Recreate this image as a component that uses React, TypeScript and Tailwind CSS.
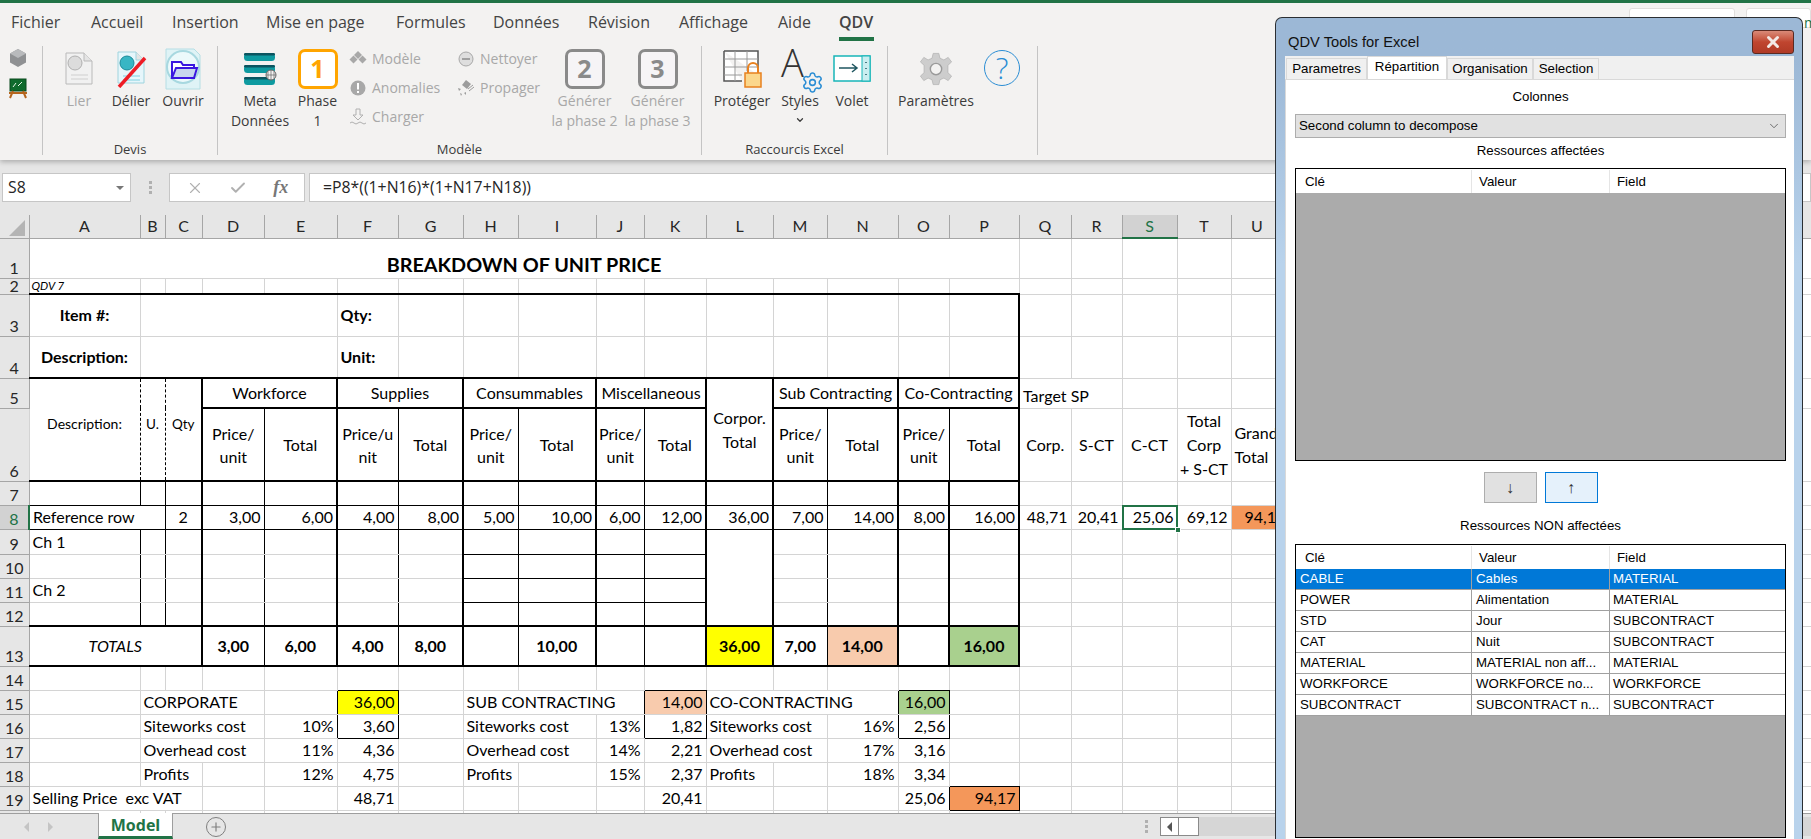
import type { ReactNode } from 'react';
import { ChevronDown, X, Check, Plus, Settings } from 'lucide-react';
import clsx from 'clsx';

const R1 = 'border-r-black';
const R2 = 'border-r-2 border-r-black';
const B1 = 'border-b-black';
const B2 = 'border-b-2 border-b-black';

const NUM = 'text-right pr-[3px]';
const MID = 'text-center';
const BOLD = 'text-center font-bold';

type Cell = { t?: ReactNode; s?: number; rs?: number; c?: string };

const colWidths = ['w-[29px]', 'w-[111px]', 'w-[25px]', 'w-[37px]', 'w-[62px]', 'w-[73px]', 'w-[61px]', 'w-[65px]', 'w-[55px]', 'w-[78px]', 'w-[48px]', 'w-[62px]', 'w-[67px]', 'w-[54px]', 'w-[71px]', 'w-[51px]', 'w-[70px]', 'w-[52px]', 'w-[51px]', 'w-[55px]', 'w-[54px]', 'w-[52px]', 'w-[528px]'];
const letters = ['A', 'B', 'C', 'D', 'E', 'F', 'G', 'H', 'I', 'J', 'K', 'L', 'M', 'N', 'O', 'P', 'Q', 'R', 'S', 'T', 'U', ''];

const empty = (n: number, c = ''): Cell[] => Array.from({ length: n }, () => ({ c }));

// columns D..P of the boxed table, with the right border each column keeps
const dToP = (bottom: string, vals: (ReactNode | Cell)[] = [], cellClass = ''): Cell[] => {
  const rights = [R1, R2, R1, R2, R1, R2, R1, R2, R2, R1, R2, R2, R2];
  return rights.map((r, i) => {
    const v = vals[i];
    const isCell = v !== null && typeof v === 'object' && 'c' in (v as object);
    return isCell
      ? { ...(v as Cell), c: clsx(r, bottom, (v as Cell).c) }
      : { t: v as ReactNode, c: clsx(r, bottom, cellClass) };
  });
};

const priceUnit = <span className="block leading-[23px]">Price/<br />unit</span>;

const rows: { n: number; h: string; cells: Cell[] }[] = [
  {
    n: 1, h: 'h-[40px]', cells: [
      { t: 'BREAKDOWN OF UNIT PRICE', s: 16, c: 'text-center font-bold text-[19.8px] align-bottom pb-[4px]' },
      ...empty(5),
    ],
  },
  {
    n: 2, h: 'h-[16px]', cells: [
      { t: 'QDV 7', c: clsx('italic text-[11.5px] leading-[14px] pl-[2px]', B2) },
      ...empty(15, B2),
      ...empty(5),
    ],
  },
  {
    n: 3, h: 'h-[42px]', cells: [
      { t: 'Item #:', c: 'text-center font-bold' },
      { s: 4 },
      { t: 'Qty:', c: 'font-bold pl-[3px]' },
      ...empty(9),
      { c: R2 },
      ...empty(5),
    ],
  },
  {
    n: 4, h: 'h-[42px]', cells: [
      { t: 'Description:', c: clsx('text-center font-bold', B2) },
      { s: 4, c: B2 },
      { t: 'Unit:', c: clsx('font-bold pl-[3px]', B2) },
      ...empty(9, B2),
      { c: clsx(R2, B2) },
      ...empty(5),
    ],
  },
  {
    n: 5, h: 'h-[30px]', cells: [
      { t: 'Description:', rs: 2, c: clsx('text-center text-[14px] pb-[12px] [border-right-style:dashed]', R1, B2) },
      { t: 'U.', rs: 2, c: clsx('text-center text-[13.5px] pb-[12px] [border-left-style:dashed] [border-right-style:dashed]', R1, B2) },
      { t: 'Qty', rs: 2, c: clsx('text-center text-[13.5px] pb-[12px] [border-left-style:dashed]', R2, B2) },
      { t: 'Workforce', s: 2, c: clsx(MID, R2, B2) },
      { t: 'Supplies', s: 2, c: clsx(MID, R2, B2) },
      { t: 'Consummables', s: 2, c: clsx(MID, R2, B2) },
      { t: 'Miscellaneous', s: 2, c: clsx(MID, R2, B2) },
      { t: <span className="block leading-[24px]">Corpor.<br />Total</span>, rs: 2, c: clsx(MID, R2, B2) },
      { t: 'Sub Contracting', s: 2, c: clsx(MID, R2, B2) },
      { t: 'Co-Contracting', s: 2, c: clsx(MID, R2, B2) },
      { t: 'Target SP', s: 2, c: 'align-bottom pl-[3px] pb-[2px]' },
      ...empty(3),
    ],
  },
  {
    n: 6, h: 'h-[71px]', cells: [
      { t: priceUnit, c: clsx(MID, R1, B2) },
      { t: 'Total', c: clsx(MID, R2, B2) },
      { t: <span className="block leading-[23px]">Price/u<br />nit</span>, c: clsx(MID, R1, B2) },
      { t: 'Total', c: clsx(MID, R2, B2) },
      { t: priceUnit, c: clsx(MID, R1, B2) },
      { t: 'Total', c: clsx(MID, R2, B2) },
      { t: priceUnit, c: clsx(MID, R1, B2) },
      { t: 'Total', c: clsx(MID, R2, B2) },
      { t: priceUnit, c: clsx(MID, R1, B2) },
      { t: 'Total', c: clsx(MID, R2, B2) },
      { t: priceUnit, c: clsx(MID, R1, B2) },
      { t: 'Total', c: clsx(MID, R2, B2) },
      { t: 'Corp.', c: MID },
      { t: 'S-CT', c: MID },
      { t: 'C-CT', c: MID },
      { t: <span className="block leading-[24px]">Total<br />Corp<br />+ S-CT</span>, c: MID },
      { t: <span className="block leading-[24px]">Grand<br />Total</span>, c: 'pl-[3px]' },
    ],
  },
  {
    n: 7, h: 'h-[24px]', cells: [
      { c: clsx(R1, B1) }, { c: clsx(R1, B1) }, { c: clsx(R2, B1) },
      ...dToP(B1),
      ...empty(5),
    ],
  },
  {
    n: 8, h: 'h-[24px]', cells: [
      { t: 'Reference row', s: 2, c: clsx('pl-[3px]', R1, B1) },
      { t: '2', c: clsx(MID, R2, B1) },
      ...dToP(B1, ['3,00', '6,00', '4,00', '8,00', '5,00', '10,00', '6,00', '12,00', '36,00', '7,00', '14,00', '8,00', '16,00'], NUM),
      { t: '48,71', c: NUM },
      { t: '20,41', c: NUM },
      {
        t: (
          <>
            25,06
            <span className="absolute inset-[-1px] border-2 border-[#217346]" />
            <span className="absolute right-[-4px] bottom-[-4px] h-[6px] w-[6px] border border-white bg-[#217346]" />
          </>
        ),
        c: clsx('relative', NUM),
      },
      { t: '69,12', c: NUM },
      { t: '94,17', c: 'bg-[#f4975a] pl-[13px] text-left' },
    ],
  },
  {
    n: 9, h: 'h-[25px]', cells: [
      { t: 'Ch 1', c: clsx('pl-[3px]', R1) }, { c: R1 }, { c: R2 },
      { c: R1 }, { c: R2 }, { c: R1 }, { c: R2 },
      { c: clsx(R1, B1) }, { c: clsx(R2, B1) }, { c: clsx(R1, B1) }, { c: clsx(R2, B1) },
      { rs: 4, c: clsx(R2, B2) },
      { c: R1 }, { c: R2 }, { c: R2 }, { c: R2 },
      ...empty(5),
    ],
  },
  {
    n: 10, h: 'h-[24px]', cells: [
      { c: R1 }, { c: R1 }, { c: R2 },
      { c: R1 }, { c: R2 }, { c: R1 }, { c: R2 },
      { c: clsx(R1, B1) }, { c: clsx(R2, B1) }, { c: clsx(R1, B1) }, { c: clsx(R2, B1) },
      { c: R1 }, { c: R2 }, { c: R2 }, { c: R2 },
      ...empty(5),
    ],
  },
  {
    n: 11, h: 'h-[24px]', cells: [
      { t: 'Ch 2', c: clsx('pl-[3px]', R1) }, { c: R1 }, { c: R2 },
      { c: R1 }, { c: R2 }, { c: R1 }, { c: R2 },
      { c: clsx(R1, B1) }, { c: clsx(R2, B1) }, { c: clsx(R1, B1) }, { c: clsx(R2, B1) },
      { c: R1 }, { c: R2 }, { c: R2 }, { c: R2 },
      ...empty(5),
    ],
  },
  {
    n: 12, h: 'h-[24px]', cells: [
      { c: clsx(R1, B2) }, { c: clsx(R1, B2) }, { c: clsx(R2, B2) },
      { c: clsx(R1, B2) }, { c: clsx(R2, B2) }, { c: clsx(R1, B2) }, { c: clsx(R2, B2) },
      { c: clsx(R1, B2) }, { c: clsx(R2, B2) }, { c: clsx(R1, B2) }, { c: clsx(R2, B2) },
      { c: clsx(R1, B2) }, { c: clsx(R2, B2) }, { c: clsx(R2, B2) }, { c: clsx(R2, B2) },
      ...empty(5),
    ],
  },
  {
    n: 13, h: 'h-[40px]', cells: [
      { t: 'TOTALS', s: 3, c: clsx('text-center italic', R2, B2) },
      ...dToP(B2, [
        '3,00', '6,00', '4,00', '8,00', '', '10,00', '', '',
        { t: '36,00', c: 'bg-[#ffff00] text-center font-bold' },
        '7,00',
        { t: '14,00', c: 'bg-[#f8cbad] text-center font-bold' },
        '',
        { t: '16,00', c: 'bg-[#a9d08e] text-center font-bold' },
      ], BOLD),
      ...empty(5),
    ],
  },
  {
    n: 14, h: 'h-[24px]', cells: [
      ...empty(5),
      { c: B1 },
      ...empty(4),
      { c: B1 },
      ...empty(3),
      { c: B1 },
      ...empty(6),
    ],
  },
  {
    n: 15, h: 'h-[24px]', cells: [
      {},
      { t: 'CORPORATE', s: 3, c: 'pl-[3px]' },
      { c: R1 },
      { t: '36,00', c: clsx('bg-[#ffff00]', NUM, R1) },
      {},
      { t: 'SUB CONTRACTING', s: 3, c: clsx('pl-[3px]', R1) },
      { t: '14,00', c: clsx('bg-[#f8cbad]', NUM, R1) },
      { t: 'CO-CONTRACTING', s: 3, c: clsx('pl-[3px]', R1) },
      { t: '16,00', c: clsx('bg-[#a9d08e]', NUM, R1) },
      ...empty(6),
    ],
  },
  {
    n: 16, h: 'h-[24px]', cells: [
      {},
      { t: 'Siteworks cost', s: 3, c: 'pl-[3px]' },
      { t: '10%', c: clsx(NUM, R1) },
      { t: '3,60', c: clsx(NUM, R1, B1) },
      {},
      { t: 'Siteworks cost', s: 2, c: 'pl-[3px]' },
      { t: '13%', c: clsx(NUM, R1) },
      { t: '1,82', c: clsx(NUM, R1, B1) },
      { t: 'Siteworks cost', s: 2, c: 'pl-[3px]' },
      { t: '16%', c: clsx(NUM, R1) },
      { t: '2,56', c: clsx(NUM, R1, B1) },
      ...empty(6),
    ],
  },
  {
    n: 17, h: 'h-[24px]', cells: [
      {},
      { t: 'Overhead cost', s: 3, c: 'pl-[3px]' },
      { t: '11%', c: NUM },
      { t: '4,36', c: NUM },
      {},
      { t: 'Overhead cost', s: 2, c: 'pl-[3px]' },
      { t: '14%', c: NUM },
      { t: '2,21', c: NUM },
      { t: 'Overhead cost', s: 2, c: 'pl-[3px]' },
      { t: '17%', c: NUM },
      { t: '3,16', c: NUM },
      ...empty(6),
    ],
  },
  {
    n: 18, h: 'h-[24px]', cells: [
      {},
      { t: 'Profits', s: 2, c: 'pl-[3px]' },
      {},
      { t: '12%', c: NUM },
      { t: '4,75', c: NUM },
      {},
      { t: 'Profits', c: 'pl-[3px]' },
      {},
      { t: '15%', c: NUM },
      { t: '2,37', c: NUM },
      { t: 'Profits', c: 'pl-[3px]' },
      {},
      { t: '18%', c: NUM },
      { t: '3,34', c: NUM },
      { c: B1 },
      ...empty(5),
    ],
  },
  {
    n: 19, h: 'h-[24px]', cells: [
      { t: 'Selling Price  exc VAT', s: 3, c: 'pl-[3px] whitespace-pre' },
      {},
      {},
      { t: '48,71', c: NUM },
      ...empty(4),
      { t: '20,41', c: NUM },
      ...empty(3),
      { t: '25,06', c: clsx(NUM, R1) },
      { t: '94,17', c: clsx('bg-[#f4975a]', NUM, R1, B1) },
      ...empty(5),
    ],
  },
  { n: 20, h: 'h-[24px]', cells: empty(21) },
];

function Sheet() {
  return (
    <table className="w-[1811px] table-fixed border-collapse font-['Lato',sans-serif] text-[16px] leading-[20px] text-black">
      <colgroup>
        {colWidths.map((w, i) => <col key={i} className={w} />)}
      </colgroup>
      <thead>
        <tr className="h-[23px]">
          <th className="border-r border-b border-[#a6a6a6] bg-[#e6e6e6] p-0 align-top">
            <svg className="block" width="29" height="22" viewBox="0 0 29 22"><path d="M9 21 L25 21 L25 5 Z" fill="#b4b4b4" /></svg>
          </th>
          {letters.map((l, i) => (
            <th
              key={i}
              className={clsx(
                'border-r border-b p-0 text-[16px] leading-[20px] font-normal',
                l === 'S'
                  ? 'border-r-[#a6a6a6] border-b-2 border-b-[#217346] bg-[#d2d2d2] text-[#217346]'
                  : 'border-[#a6a6a6] bg-[#e6e6e6] text-[#262626]',
              )}
            >
              {l}
            </th>
          ))}
        </tr>
      </thead>
      <tbody>
        {rows.map((r) => (
          <tr key={r.n} className={r.h}>
            <td
              className={clsx(
                'border-r border-b border-[#a6a6a6] p-0 text-center align-bottom text-[16px] leading-[20px]',
                r.n === 8 ? 'border-r-2 border-r-[#217346] bg-[#d2d2d2] text-[#217346]' : 'bg-[#e6e6e6] text-[#262626]',
              )}
            >
              {r.n === 2 ? <div className="h-[15px] overflow-hidden leading-[13px]">2</div> : r.n < 20 && r.n}
            </td>
            {r.cells.map((cell, i) => (
              <td
                key={i}
                colSpan={cell.s}
                rowSpan={cell.rs}
                className={clsx('overflow-visible border border-[#d4d4d4] p-0 whitespace-nowrap', cell.c)}
              >
                {cell.t}
              </td>
            ))}
            <td className="border border-[#d4d4d4] p-0" />
          </tr>
        ))}
      </tbody>
    </table>
  );
}

function BigBtn({ w, icon, lines, off }: { w: string; icon: ReactNode; lines: ReactNode[]; off?: boolean }) {
  return (
    <div className={clsx('flex flex-col items-center', w, off ? 'text-[#a8a8a8]' : 'text-[#3b3b3b]')}>
      <div className="flex h-[45px] items-center justify-center">{icon}</div>
      {lines.map((l, i) => (
        <div key={i} className="h-[20px] leading-[20px] whitespace-nowrap">{l}</div>
      ))}
    </div>
  );
}

function SmallBtn({ icon, label }: { icon: ReactNode; label: string }) {
  return (
    <div className="flex h-[29px] items-center gap-[5px] text-[#a8a8a8]">
      <div className="flex w-[18px] justify-center">{icon}</div>
      <span>{label}</span>
    </div>
  );
}

function Group({ w, label, children }: { w: string; label?: string; children: ReactNode }) {
  return (
    <div className={clsx('relative flex h-[109px] shrink-0 border-r border-[#c4c4c4]', w)}>
      {children}
      {label && (
        <div className="absolute right-0 bottom-[-3px] left-0 text-center text-[13px] leading-[18px] text-[#3b3b3b]">{label}</div>
      )}
    </div>
  );
}

function PhaseIcon({ n, on }: { n: number; on?: boolean }) {
  return (
    <div
      className={clsx(
        'mt-[1px] flex h-[40px] w-[40px] items-center justify-center rounded-[7px] border-[3px] text-[25px] font-bold',
        on ? 'border-[#ffa500] bg-white text-[#ffa500]' : 'border-[#8a8a8a] bg-[#f6f4f6] text-[#8a8a8a]',
      )}
    >
      {n}
    </div>
  );
}

const DocShape = ({ fill = '#f1f1f1', stroke = '#b9b9b9' }: { fill?: string; stroke?: string }) => (
  <>
    <path d="M4 2 H22 L30 10 V33 H4 Z" fill={fill} stroke={stroke} />
    <path d="M22 2 V10 H30" fill="#e4e4e4" stroke={stroke} />
  </>
);

function Ribbon() {
  return (
    <div className="relative z-10 h-[160px] shrink-0 bg-[#f3f2f1] font-['Open_Sans',sans-serif] shadow-[0_2px_5px_rgba(0,0,0,0.25)]">
      <div className="h-[3px] bg-[#217346]" />
      <div className="flex h-[37px] items-center pl-[11px] text-[16px] leading-[36px] text-[#444]">
        <span className="w-[80px]">Fichier</span>
        <span className="w-[81px]">Accueil</span>
        <span className="w-[94px]">Insertion</span>
        <span className="w-[130px]">Mise en page</span>
        <span className="w-[97px]">Formules</span>
        <span className="w-[95px]">Données</span>
        <span className="w-[91px]">Révision</span>
        <span className="w-[99px]">Affichage</span>
        <span className="w-[61px]">Aide</span>
        <span className="relative font-semibold">
          QDV
          <span className="absolute right-[-1px] bottom-[-1px] left-0 h-[4px] bg-[#217346]" />
        </span>
      </div>
      <div className="absolute top-[8px] left-[1629px] h-[20px] w-[106px] rounded-t-[3px] border border-[#e1dfdd] bg-white" />
      <div className="absolute top-[8px] left-[1746px] h-[20px] w-[65px] rounded-t-[3px] border border-[#e1dfdd] bg-white" />
      <div className="absolute top-[16px] left-[1804px] text-[14px] leading-[14px] text-[#217346]">m</div>

      <div className="mt-[6px] flex text-[14px]">
        <Group w="w-[43px]">
          <div className="flex w-full flex-col items-center gap-[10px] pt-[2px] pr-[7px]">
            <svg width="18" height="20" viewBox="0 0 18 20"><path d="M9 1 L17 5.5 V14.5 L9 19 L1 14.5 V5.5 Z" fill="#8f9193" /><path d="M9 1 L17 5.5 L9 10 L1 5.5 Z" fill="#b8babc" /></svg>
            <svg width="20" height="21" viewBox="0 0 20 21"><rect x="2" y="1" width="16" height="12" fill="#0f6b2d" stroke="#0a4a1f" /><path d="M5 9 L8 5 M10 8 L14 4" stroke="#e8f5e8" /><path d="M5 13 L2 20 M15 13 L18 20 M1 15 H19" stroke="#b5651d" strokeWidth="2" /></svg>
          </div>
        </Group>

        <Group w="w-[175px]" label="Devis">
          <div className="flex pl-[10px]">
            <BigBtn w="w-[52px]" off lines={['Lier']} icon={
              <svg width="34" height="36" viewBox="0 0 34 36"><DocShape /><circle cx="13" cy="12" r="7" fill="#dcdcdc" stroke="#b0b0b0" /><path d="M9 24 H26 M9 28 H26" stroke="#cfcfcf" /></svg>
            } />
            <BigBtn w="w-[52px]" lines={['Délier']} icon={
              <svg width="34" height="38" viewBox="0 0 34 38"><DocShape fill="#e6f6fb" stroke="#9fd4de" /><circle cx="13" cy="13" r="7" fill="#38b6c4" stroke="#1a8a99" /><path d="M9 26 H26 M9 30 H26" stroke="#7fd0e0" /><path d="M5 37 L31 8" stroke="#ee1c25" strokeWidth="3.5" /></svg>
            } />
            <BigBtn w="w-[52px]" lines={['Ouvrir']} icon={
              <svg width="38" height="42" viewBox="0 0 38 42"><path d="M2 1 H30 L36 7 V41 H2 Z" fill="#dff3f6" stroke="#b5dee4" /><circle cx="19" cy="19" r="16" fill="#ecf9fb" stroke="#a8d8e0" strokeWidth="2" /><path d="M8 14 H17 L19 17 H30 V30 H8 Z" fill="#fff" stroke="#3a16e0" strokeWidth="2" /><path d="M8 30 L12 20 H33 L30 30 Z" fill="#c8d6ee" stroke="#3a16e0" strokeWidth="2" /></svg>
            } />
          </div>
        </Group>

        <Group w="w-[484px]" label="Modèle">
          <div className="flex pl-[7px]">
            <BigBtn w="w-[70px]" lines={['Meta', 'Données']} icon={
              <svg width="36" height="36" viewBox="0 0 36 36">
                <rect x="2" y="2" width="31" height="8" rx="3.5" fill="#0e9aa0" /><rect x="2" y="2" width="31" height="2.5" rx="1.2" fill="#0b5560" />
                <rect x="2" y="14" width="31" height="8" rx="3.5" fill="#0e9aa0" /><rect x="2" y="14" width="31" height="2.5" rx="1.2" fill="#0b5560" />
                <rect x="2" y="26" width="31" height="8" rx="3.5" fill="#0e9aa0" /><rect x="2" y="26" width="31" height="2.5" rx="1.2" fill="#0b5560" />
                <circle cx="29" cy="24" r="5" fill="#f3f2f1" stroke="#666" /><path d="M24 24 H34 M29 19 V29 M26 20.5 V27.5 M32 20.5 V27.5" stroke="#666" strokeWidth="0.7" />
              </svg>
            } />
            <BigBtn w="w-[45px]" lines={['Phase', '1']} icon={<PhaseIcon n={1} on />} />
            <div className="mt-[-2px] ml-[9px] flex w-[108px] flex-col">
              <SmallBtn label="Modèle" icon={<svg width="18" height="18" viewBox="0 0 18 18"><path d="M9 1 L13 5 L9 9 L5 5 Z M4.5 5.5 L8.5 9.5 L4.5 13.5 L0.5 9.5 Z M13.5 5.5 L17.5 9.5 L13.5 13.5 L9.5 9.5 Z" fill="#a8a8a8" /></svg>} />
              <SmallBtn label="Anomalies" icon={<svg width="16" height="16" viewBox="0 0 16 16"><circle cx="8" cy="8" r="7.5" fill="#a8a8a8" /><rect x="7" y="3" width="2" height="6.5" fill="#fff" /><rect x="7" y="11" width="2" height="2" fill="#fff" /></svg>} />
              <SmallBtn label="Charger" icon={<svg width="18" height="18" viewBox="0 0 18 18" fill="none" stroke="#b0b0b0"><path d="M7 1 H11 V7 H14 L9 12 L4 7 H7 Z" /><path d="M1 15 Q3 13 5 15 T9 15 T13 15 T17 15" /></svg>} />
            </div>
            <div className="mt-[-2px] flex w-[91px] flex-col">
              <SmallBtn label="Nettoyer" icon={<svg width="16" height="16" viewBox="0 0 16 16"><circle cx="8" cy="8" r="7" fill="#dedede" stroke="#a8a8a8" /><path d="M4 8 H12" stroke="#a0a0a0" strokeWidth="2" /></svg>} />
              <SmallBtn label="Propager" icon={<svg width="18" height="18" viewBox="0 0 18 18" fill="#9c9c9c"><path d="M9 1 L14 5 L10 10 L5 6 Z" /><path d="M1 9 L4 10 L2 12 Z M3 14 L5 15 L4 17 Z M7 14 L9 13 L9 16 Z" /><path d="M11 10 L16 6 M12 12 L17 8" stroke="#9c9c9c" /></svg>} />
            </div>
            <BigBtn w="w-[73px]" off lines={['Générer', 'la phase 2']} icon={<PhaseIcon n={2} />} />
            <BigBtn w="w-[73px]" off lines={['Générer', 'la phase 3']} icon={<PhaseIcon n={3} />} />
          </div>
        </Group>

        <Group w="w-[186px]" label="Raccourcis Excel">
          <div className="flex pl-[6px]">
            <BigBtn w="w-[68px]" lines={['Protéger']} icon={
              <svg width="40" height="40" viewBox="0 0 40 40">
                <path d="M2 2 H36 V26 M2 2 V32 H20" fill="#fff" stroke="#555" strokeWidth="1.5" />
                <path d="M2 10 H36 M2 18 H36 M2 26 H20 M13 2 V32 M25 2 V22" stroke="#9a9a9a" />
                <path d="M26 24 V19 A5 5 0 0 1 36 19 V24" fill="none" stroke="#e8811f" strokeWidth="2" />
                <rect x="23" y="24" width="16" height="14" fill="#fbd78c" stroke="#e8811f" strokeWidth="1.5" />
              </svg>
            } />
            <BigBtn w="w-[48px]" lines={['Styles', <ChevronDown key="c" className="mt-[4px] h-[10px] w-[10px]" strokeWidth={3} />]} icon={
              <div className="relative mt-[-6px] h-[44px] w-[38px]">
                <span className="absolute top-[-7px] left-[0px] text-[38px] leading-[50px] font-light text-[#333]">A</span>
                <Settings className="absolute right-[-5px] bottom-[-6px] h-[23px] w-[23px] text-[#2a8dd4]" strokeWidth={1.6} />
              </div>
            } />
            <BigBtn w="w-[56px]" lines={['Volet']} icon={
              <svg width="38" height="28" viewBox="0 0 38 28"><rect x="1" y="1" width="36" height="25" fill="#fff" stroke="#17b5b8" strokeWidth="1.5" /><rect x="29" y="1" width="8" height="25" fill="#c9eef0" stroke="#17b5b8" /><path d="M6 13 H23 M19 9 L24 13 L19 17" fill="none" stroke="#1f5660" strokeWidth="1.5" /><path d="M33 7 V8 M33 13 V14 M33 19 V20" stroke="#1f5660" strokeWidth="1.5" /></svg>
            } />
          </div>
        </Group>

        <Group w="w-[150px]">
          <div className="flex pl-[8px]">
            <BigBtn w="w-[80px]" lines={['Paramètres']} icon={
              <svg width="34" height="36" viewBox="0 0 24 24"><path d="M10 1 H14 L14.8 4.4 L17.6 5.6 L20.6 3.8 L23 7 L20.4 9.4 V12 V14.6 L23 17 L20.6 20.2 L17.6 18.4 L14.8 19.6 L14 23 H10 L9.2 19.6 L6.4 18.4 L3.4 20.2 L1 17 L3.6 14.6 V9.4 L1 7 L3.4 3.8 L6.4 5.6 L9.2 4.4 Z" fill="#cdcdcd" stroke="#b0b0b0" strokeWidth="0.5" /><circle cx="12" cy="12" r="4" fill="#f3f2f1" stroke="#9a9a9a" /></svg>
            } />
            <div className="flex w-[52px] justify-center pt-[4px]">
              <div className="flex h-[36px] w-[36px] items-center justify-center rounded-full border-[1.5px] border-[#2a8dd4] text-[30px] leading-none font-light text-[#2a8dd4]">?</div>
            </div>
          </div>
        </Group>
      </div>
    </div>
  );
}

function FormulaBar() {
  return (
    <div className="flex h-[55px] shrink-0 items-start bg-[#e6e6e6] pt-[13px] pl-[2px] font-['Open_Sans',sans-serif] text-[15.8px] text-[#262626]">
      <div className="flex h-[29px] w-[129px] items-center justify-between border border-[#c6c6c6] bg-white pr-[6px] pl-[5px]">
        <span>S8</span>
        <span className="h-0 w-0 border-x-[4px] border-t-[4px] border-x-transparent border-t-[#777]" />
      </div>
      <div className="flex h-[29px] w-[38px] flex-col items-center justify-center gap-[2px]">
        <span className="h-[3px] w-[3px] bg-[#b0b0b0]" />
        <span className="h-[3px] w-[3px] bg-[#b0b0b0]" />
        <span className="h-[3px] w-[3px] bg-[#b0b0b0]" />
      </div>
      <div className="flex h-[29px] w-[136px] items-center justify-around border border-[#c6c6c6] bg-white px-[3px] text-[#b0b0b0]">
        <X className="h-[18px] w-[18px]" strokeWidth={1.5} />
        <Check className="h-[18px] w-[18px]" strokeWidth={2.5} />
        <span className="font-['Liberation_Serif',serif] text-[18px] font-bold text-[#777] italic">fx</span>
      </div>
      <div className="ml-[4px] flex h-[29px] flex-1 items-center border border-[#c6c6c6] bg-white pl-[13px]">
        =P8*((1+N16)*(1+N17+N18))
      </div>
    </div>
  );
}

function SheetTabs() {
  return (
    <div className="relative z-[1] flex h-[26px] shrink-0 items-stretch border-t border-[#9e9e9e] bg-[#e6e6e6] font-['Open_Sans',sans-serif]">
      <div className="flex w-[98px] items-center gap-[19px] pl-[24px]">
        <span className="h-0 w-0 border-y-[5px] border-r-[5px] border-y-transparent border-r-[#c4c4c4]" />
        <span className="h-0 w-0 border-y-[5px] border-l-[5px] border-y-transparent border-l-[#c4c4c4]" />
      </div>
      <div className="mt-[-1px] flex w-[75px] items-center justify-center border-x border-b-[3px] border-x-[#9e9e9e] border-b-[#217346] bg-white text-[16px] font-bold text-[#217346]">
        Model
      </div>
      <div className="ml-[33px] flex items-center">
        <div className="flex h-[20px] w-[20px] items-center justify-center rounded-full border-[1.5px] border-[#7f7f7f]">
          <Plus className="h-[14px] w-[14px] text-[#7f7f7f]" strokeWidth={2} />
        </div>
      </div>
      <div className="ml-auto flex w-[666px] items-center">
        <div className="flex flex-col gap-[2px] pr-[12px]">
          <span className="h-[3px] w-[3px] bg-[#b0b0b0]" />
          <span className="h-[3px] w-[3px] bg-[#b0b0b0]" />
          <span className="h-[3px] w-[3px] bg-[#b0b0b0]" />
        </div>
        <div className="flex h-[19px] flex-1 items-stretch bg-[#d6d6d6]">
          <div className="flex w-[19px] items-center justify-center border border-[#8a8a8a] bg-white">
            <span className="h-0 w-0 border-y-[5px] border-r-[5px] border-y-transparent border-r-[#555]" />
          </div>
          <div className="w-[20px] border-y border-r border-[#8a8a8a] bg-white" />
        </div>
      </div>
    </div>
  );
}

const resourceRows = [
  ['CABLE', 'Cables', 'MATERIAL'],
  ['POWER', 'Alimentation', 'MATERIAL'],
  ['STD', 'Jour', 'SUBCONTRACT'],
  ['CAT', 'Nuit', 'SUBCONTRACT'],
  ['MATERIAL', 'MATERIAL non aff...', 'MATERIAL'],
  ['WORKFORCE', 'WORKFORCE no...', 'WORKFORCE'],
  ['SUBCONTRACT', 'SUBCONTRACT n...', 'SUBCONTRACT'],
];

function ListView({ h, data = [] }: { h: string; data?: string[][] }) {
  return (
    <div className={clsx('shrink-0 border border-black bg-[#ababab]', h)}>
      <div className="grid h-[24px] grid-cols-[176px_138px_1fr] bg-white pt-[1px] leading-[23px]">
        <div className="border-r border-[#e5e5e5] pl-[9px]">Clé</div>
        <div className="border-r border-[#e5e5e5] pl-[7px]">Valeur</div>
        <div className="pl-[7px]">Field</div>
      </div>
      {data.map((row, i) => (
        <div
          key={row[0]}
          className={clsx(
            'grid h-[21px] grid-cols-[176px_138px_1fr] border-b border-[#a0a0a0] leading-[20px]',
            i === 0 ? 'bg-[#0078d7] text-white' : 'bg-white',
          )}
        >
          <div className="border-r border-[#a0a0a0] pl-[4px]">{row[0]}</div>
          <div className="border-r border-[#a0a0a0] pl-[4px] whitespace-nowrap">{row[1]}</div>
          <div className="pl-[3px]">{row[2]}</div>
        </div>
      ))}
    </div>
  );
}

function ToolsWindow() {
  const tabs = [
    { label: 'Parametres', w: 'w-[81px]' },
    { label: 'Répartition', w: 'w-[80px]', on: true },
    { label: 'Organisation', w: 'w-[86px]' },
    { label: 'Selection', w: 'w-[66px]' },
  ];
  return (
    <div className="absolute top-[17px] bottom-0 left-[1275px] z-20 flex w-[528px] flex-col rounded-t-[7px] border border-b-0 border-[#2b2f33] bg-gradient-to-b from-[#9cb8d6] from-[5%] to-[#b9d3ec] to-[30%] pr-[8px] pl-[9px] font-['Liberation_Sans',sans-serif] text-[13.3px] text-black">
      <div className="flex h-[38px] shrink-0 items-center justify-between pt-[10px]">
        <span className="pl-[3px] text-[14.7px] text-[#111]">QDV Tools for Excel</span>
        <div className="flex h-[24px] w-[42px] items-center justify-center rounded-[3px] border border-[#5a2a22] bg-gradient-to-b from-[#d98a78] via-[#c0452f] to-[#b03a26]">
          <X className="h-[18px] w-[18px] text-[#f3e9e6]" strokeWidth={4} />
        </div>
      </div>
      <div className="flex min-h-0 flex-1 flex-col bg-[#f0f0f0]">
        <div className="flex h-[23px] shrink-0 items-end pl-[1px]">
          {tabs.map((t) => (
            <div
              key={t.label}
              className={clsx(
                'flex items-center justify-center border border-b-0 border-[#d9d9d9]',
                t.w,
                t.on ? 'h-[23px] bg-white pb-[3px]' : 'h-[21px] bg-[#f0f0f0]',
              )}
            >
              {t.label}
            </div>
          ))}
        </div>
        <div className="flex min-h-0 flex-1 flex-col border-t border-l border-[#d9d9d9] bg-white pr-[8px] pl-[9px]">
          <div className="mt-[6px] h-[22px] shrink-0 text-center leading-[22px]">Colonnes</div>
          <div className="mt-[6px] flex h-[24px] shrink-0 items-center justify-between border border-[#adadad] bg-[#e1e1e1] pr-[4px] pl-[3px]">
            <span>Second column to decompose</span>
            <ChevronDown className="h-[14px] w-[14px] text-[#444]" strokeWidth={1.25} />
          </div>
          <div className="mt-[3px] h-[20px] shrink-0 text-center leading-[20px]">Ressources affectées</div>
          <div className="h-[7px] shrink-0" />
          <ListView h="h-[293px]" />
          <div className="mt-[11px] flex shrink-0 justify-center gap-[8px]">
            <div className="flex h-[31px] w-[53px] items-center justify-center border border-[#adadad] bg-[#e1e1e1] text-[16px] text-[#333]">↓</div>
            <div className="flex h-[31px] w-[53px] items-center justify-center border border-[#0078d7] bg-[#e5f1fb] text-[16px] text-[#333]">↑</div>
          </div>
          <div className="mt-[13px] h-[20px] shrink-0 text-center leading-[20px]">Ressources NON affectées</div>
          <div className="h-[8px] shrink-0" />
          <ListView h="h-[294px]" data={resourceRows} />
        </div>
      </div>
    </div>
  );
}

export default function App() {
  return (
    <div className="relative flex h-[839px] w-[1811px] flex-col overflow-hidden bg-white">
      <Ribbon />
      <FormulaBar />
      <div className="min-h-0 flex-1 overflow-hidden">
        <Sheet />
      </div>
      <SheetTabs />
      <ToolsWindow />
    </div>
  );
}
